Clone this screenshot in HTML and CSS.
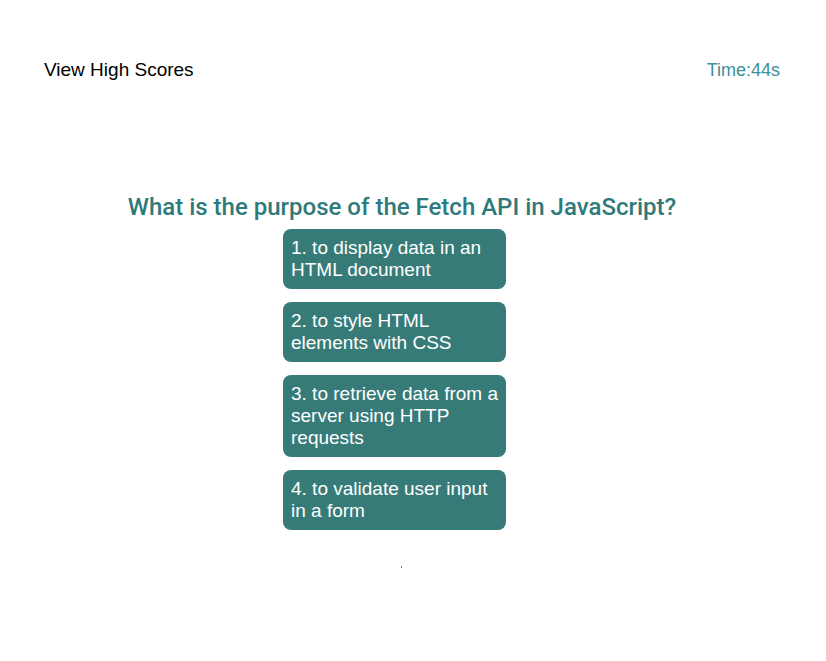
FILE: index.html
```html
<!DOCTYPE html>
<html>
<head>
<meta charset="utf-8">
<link rel="stylesheet" href="styles.css">
</head>
<body>
<header class="top">
  <a class="scores">View High Scores</a>
  <span class="timer">Time:44s</span>
</header>
<main class="quiz">
  <h2 class="question">What is the purpose of the Fetch API in JavaScript?</h2>
  <div class="options">
    <button class="opt">1. to display data in an HTML document</button>
    <button class="opt">2. to style HTML elements with CSS</button>
    <button class="opt">3. to retrieve data from a server using HTTP requests</button>
    <button class="opt">4. to validate user input in a form</button>
  </div>
  <div class="result"><span class="dot"></span></div>
</main>
</body>
</html>
```
FILE: styles.css
```css
html, body { margin: 0; padding: 0; background: #fff; }
body { font-family: "Liberation Sans", Arial, sans-serif; }
.top {
  display: flex;
  justify-content: space-between;
  align-items: center;
  padding: 59px 46px 0 44px;
  height: 22px;
}
.scores { font-size: 19px; color: #000; }
.timer { font-size: 18px; color: #3f8e9c; }
.quiz {
  display: flex;
  flex-direction: column;
  align-items: center;
  padding-right: 22px;
  padding-top: 112px;
}
.question {
  margin: 0 0 8px;
  font-family: "Roboto", sans-serif;
  font-weight: 500;
  font-size: 24px;
  color: #2f7a7a;
  line-height: 28px;
}
.options {
  display: flex;
  flex-direction: column;
  gap: 13px;
  margin-right: 15px;
}
.opt {
  width: 223px;
  border: none;
  border-radius: 8px;
  background: #377b79;
  color: #fff;
  font-family: "Liberation Sans", Arial, sans-serif;
  font-size: 19px;
  line-height: 22px;
  text-align: left;
  padding: 8px 8px;
}
.result { margin-top: 36px; margin-right: 2px; height: 2px; }
.dot { display: block; width: 1px; height: 2px; background: #777; }
```
